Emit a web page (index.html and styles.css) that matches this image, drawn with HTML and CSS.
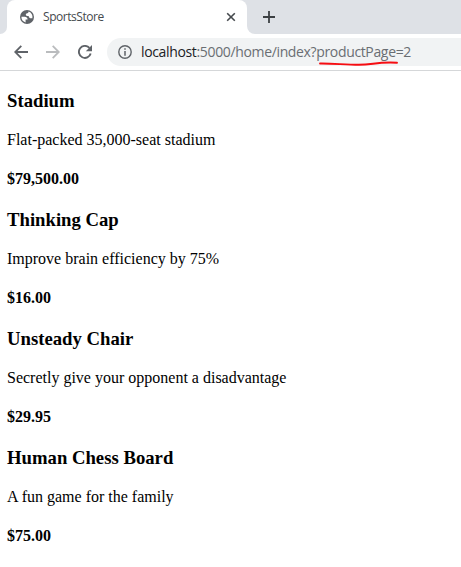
FILE: index.html
```html
<!DOCTYPE html>
<html lang="en">
<head>
<meta charset="utf-8">
<title>SportsStore</title>
<link rel="stylesheet" href="styles.css">
</head>
<body>
<header class="browser">
  <div class="tabstrip">
    <div class="tab-before"></div>
    <div class="tab">
      <svg class="globe" width="14" height="14" viewBox="0 0 14 14"><circle cx="7" cy="7" r="7" fill="#5f6368"/><path d="M1.4 6.8H4.6C6.4 6.8 7.6 7.8 7.6 9.6H5.6V12.4C3 11.8 1.3 9.6 1.4 6.8ZM8.6 1.6C8.6 2.8 8 3.3 6.4 3.5C5.4 4.2 5.6 5.8 7 6H8.6C9 8 10 8.6 12.4 8.3C12.9 5.5 11.6 2.6 8.6 1.6Z" fill="#fff"/></svg>
      <span class="tab-title">SportsStore</span>
      <svg class="close" width="10" height="10" viewBox="0 0 10 10"><path d="M1.2 1.2 8.8 8.8M8.8 1.2 1.2 8.8" stroke="#45494d" stroke-width="1.6"/></svg>
    </div>
    <div class="tab-after">
      <svg width="12" height="12" viewBox="0 0 12 12"><path d="M6 0V12M0 6H12" stroke="#3c4043" stroke-width="1.8"/></svg>
    </div>
  </div>
  <div class="toolbar">
    <svg class="back" width="14" height="14" viewBox="0 0 14 14"><path d="M14 7H1.5M7.3 .8 1.2 7l6.1 6.2" fill="none" stroke="#5f6368" stroke-width="1.8"/></svg>
    <svg class="forward" width="14" height="14" viewBox="0 0 14 14"><path d="M0 7H12.5M6.7 .8 12.8 7l-6.1 6.2" fill="none" stroke="#babcbe" stroke-width="1.8"/></svg>
    <svg class="reload" width="14" height="14" viewBox="0 0 14 14"><path d="M12.7 8.5A6 6 0 1 1 11.4 2.9" fill="none" stroke="#5f6368" stroke-width="1.9"/><path d="M14 0V6.2H7.8Z" fill="#5f6368"/></svg>
    <div class="omnibox">
      <svg width="14" height="14" viewBox="0 0 14 14"><circle cx="7" cy="7" r="6.2" fill="none" stroke="#5f6368" stroke-width="1.4"/><path d="M7 3.2V4.8M7 6.1V10.7" stroke="#5f6368" stroke-width="1.5"/></svg>
      <div class="url"><span class="host">localhost</span>:5000/home/index?<span class="query">productPage<svg class="scribble" width="79" height="6" viewBox="0 0 79 6"><path d="M1 2.5C14 2.3 26 3.8 40 3.8C54 3.8 58 .6 78 1.7" fill="none" stroke="#f60d12" stroke-width="1.9" stroke-linecap="round"/></svg></span>=2</div>
    </div>
  </div>
</header>
<main class="products">
  <article><h3>Stadium</h3><p>Flat-packed 35,000-seat stadium</p><h4>$79,500.00</h4></article>
  <article><h3>Thinking Cap</h3><p>Improve brain efficiency by 75%</p><h4>$16.00</h4></article>
  <article><h3>Unsteady Chair</h3><p>Secretly give your opponent a disadvantage</p><h4>$29.95</h4></article>
  <article><h3>Human Chess Board</h3><p>A fun game for the family</p><h4>$75.00</h4></article>
</main>
</body>
</html>
```
FILE: styles.css
```css
* { box-sizing: border-box; }
body { margin: 0; background: #fff; overflow: hidden; }
svg { display: block; flex: none; }
.browser { height: 71px; border-bottom: 1px solid #d5d7d9; font-family: "Open Sans", sans-serif; }
.tabstrip { display: flex; height: 34px; background: #fff; }
.tab-before { width: 7px; background: #dee1e6; border-bottom-right-radius: 7px; }
.tab { display: flex; align-items: center; width: 240px; padding: 0 11px 0 13px; background: linear-gradient(#dee1e6 8px, #fff 8px); position: relative; isolation: isolate; }
.tab::before { content: ""; position: absolute; inset: 0; z-index: -1; background: #fff; border-radius: 8px 8px 0 0; }
.tab-title { margin-left: 9px; font-size: 12px; line-height: 16px; letter-spacing: -0.45px; color: #45494d; }
.close { margin-left: auto; }
.tab-after { flex: 1; padding: 11px 0 0 16px; background: #dee1e6; border-bottom-left-radius: 8px; }
.toolbar { display: flex; align-items: center; height: 36px; padding-left: 14px; }
.forward { margin-left: 18px; }
.reload { margin-left: 18px; }
.omnibox { display: flex; align-items: center; flex: 1; height: 28px; margin-left: 15px; padding-left: 11px; background: #f1f3f4; border-radius: 14px 0 0 14px; }
.url { margin-left: 9px; font-size: 14px; line-height: 20px; letter-spacing: -0.35px; white-space: nowrap; color: #6a6e73; }
.host { color: #202124; }
.query { position: relative; }
.scribble { position: absolute; left: 3px; top: 19px; }
.products { padding: 19px 7px 0; font-family: "Liberation Serif", serif; color: #000; }
article { height: 119px; }
h3, h4, p { margin: 0; }
h3 { font-size: 18.72px; line-height: 22px; }
p { margin-top: 19px; font-size: 16px; line-height: 18px; }
h4 { margin-top: 21px; font-size: 16px; line-height: 18px; }
```
